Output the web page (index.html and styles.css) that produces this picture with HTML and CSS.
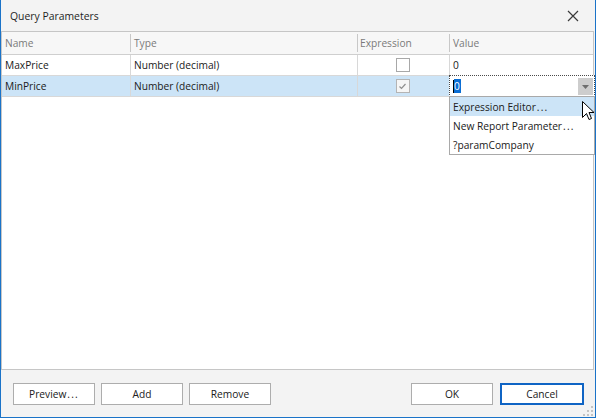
FILE: index.html
```html
<!DOCTYPE html>
<html>
<head>
<meta charset="utf-8">
<link rel="stylesheet" href="styles.css">
</head>
<body>
<div class="window">
  <div class="titlebar">
    <span class="title">Query Parameters</span>
    <span class="close">
      <svg width="12" height="12" viewBox="0 0 12 12"><path d="M1 1 L11 11 M11 1 L1 11" stroke="#3a3a3a" stroke-width="1.2" fill="none"/></svg>
    </span>
  </div>
  <div class="grid">
    <div class="row header">
      <div class="cell c-name"><span class="htext">Name</span></div>
      <div class="cell c-type"><span class="htext">Type</span></div>
      <div class="cell c-expr"><span class="htext">Expression</span></div>
      <div class="cell c-val"><span class="htext">Value</span></div>
    </div>
    <div class="row">
      <div class="cell c-name">MaxPrice</div>
      <div class="cell c-type">Number (decimal)</div>
      <div class="cell c-expr"><span class="check"></span></div>
      <div class="cell c-val">0</div>
    </div>
    <div class="row selected">
      <div class="cell c-name">MinPrice</div>
      <div class="cell c-type">Number (decimal)</div>
      <div class="cell c-expr"><span class="check checked"><svg width="11" height="11" viewBox="0 0 11 11"><path d="M2.5 5.5 L4.5 7.5 L8.5 3" stroke="#8f8f8f" stroke-width="1.2" fill="none"/></svg></span></div>
      <div class="cell c-val">
        <div class="editor">
          <span class="caret"></span><span class="sel">0</span>
          <span class="ddbtn"><svg width="7" height="4" viewBox="0 0 7 4"><path d="M0 0 L7 0 L3.5 4 Z" fill="#6e6e6e"/></svg></span>
        </div>
        <div class="popup">
          <div class="item hover">Expression Editor<span class="ell">...</span></div>
          <div class="item">New Report Parameter<span class="ell">...</span></div>
          <div class="item">?paramCompany</div>
        </div>
      </div>
    </div>
  </div>
  <div class="footer">
    <div class="group">
      <button class="btn">Preview<span class="ell">...</span></button>
      <button class="btn">Add</button>
      <button class="btn">Remove</button>
    </div>
    <div class="group">
      <button class="btn">OK</button>
      <button class="btn default">Cancel</button>
    </div>
  </div>
  <svg class="grip" width="10" height="10" viewBox="0 0 10 10">
    <rect x="8" y="0" width="2" height="2" fill="#c4c4c4"/>
    <rect x="4" y="4" width="2" height="2" fill="#c4c4c4"/>
    <rect x="8" y="4" width="2" height="2" fill="#c4c4c4"/>
    <rect x="0" y="8" width="2" height="2" fill="#c4c4c4"/>
    <rect x="4" y="8" width="2" height="2" fill="#c4c4c4"/>
    <rect x="8" y="8" width="2" height="2" fill="#c4c4c4"/>
  </svg>
  <svg class="cursor" width="13" height="21" viewBox="0 0 13 21">
    <path d="M0.5 0.5 L0.5 16.5 L4.5 12.5 L7 18.5 L9.5 17.5 L7 11.5 L12 11.5 Z" fill="#ffffff" stroke="#000000" stroke-width="1" stroke-linejoin="miter"/>
  </svg>
</div>
</body>
</html>
```
FILE: styles.css
```css
* { box-sizing: border-box; }
html, body { margin: 0; padding: 0; }
body {
  width: 596px;
  height: 418px;
  overflow: hidden;
  font-family: "Open Sans", "Noto Sans", sans-serif;
  font-size: 10.2px;
  color: #202020;
}
.window {
  position: relative;
  width: 596px;
  height: 418px;
  background: #f3f3f3;
  border-left: 1px solid #1a73c8;
  border-right: 1px solid #1a73c8;
  border-bottom: 1px solid #1a73c8;
  display: flex;
  flex-direction: column;
}
.titlebar {
  height: 31px;
  flex: none;
  display: flex;
  align-items: center;
  justify-content: space-between;
  padding: 0 16px 0 9px;
}
.title {
  font-size: 10.4px;
  color: #1e1e1e;
}
.close {
  display: flex;
  width: 12px;
  height: 12px;
  margin-top: 1px;
}
.ell { letter-spacing: 1.2px; margin-left: 1px; }
.grid {
  flex: none;
  height: 339px;
  margin-right: 1px;
  background: #ffffff;
  border: 1px solid #c6c6c6;
}
.row {
  display: grid;
  grid-template-columns: 129px 227px 92px 1fr;
  height: 21px;
  border-bottom: 1px solid #d8d8d8;
}
.row.header {
  height: 23px;
  background: #f7f7f7;
  border-bottom: 1px solid #cfcfcf;
}
.cell {
  display: flex;
  align-items: center;
  padding-left: 3px;
  border-right: 1px solid #d8d8d8;
  white-space: nowrap;
  position: relative;
}
.c-val { border-right: none; }
.header .cell {
  border-right: none;
  padding-left: 3px;
}
.header .c-type::before, .header .c-expr::before, .header .c-val::before {
  content: "";
  position: absolute;
  left: -1px;
  top: 2px;
  bottom: 2px;
  width: 1px;
  background: #c8c8c8;
}
.header .c-expr { padding-left: 2px; justify-content: flex-start; }
.htext { color: #7a7a7a; }
.c-expr { justify-content: center; padding-left: 0; }
.selected .c-name, .selected .c-type, .selected .c-expr {
  background: #cce4f7;
}
.check {
  width: 14px;
  height: 14px;
  border: 1px solid #a8a8a8;
  background: #ffffff;
  display: flex;
  align-items: center;
  justify-content: center;
  margin-left: -2px;
}
.check.checked { background: #f6f6f6; border-color: #b4b4b4; }
.editor {
  position: absolute;
  left: -1px;
  top: -1px;
  width: 146px;
  height: 22px;
  border: 1px dotted #4a4a4a;
  background: #ffffff;
  display: flex;
  align-items: center;
  padding-left: 3px;
}
.caret {
  width: 1px;
  height: 13px;
  background: #000;
}
.sel {
  background: #0a6ed4;
  color: #ffffff;
  line-height: 14px;
  padding: 0 1px 0 0;
}
.ddbtn {
  position: absolute;
  right: 1px;
  top: 2px;
  width: 15px;
  height: 17px;
  background: #cdcdcd;
  display: flex;
  align-items: center;
  justify-content: center;
}
.popup {
  position: absolute;
  left: -1px;
  top: 20px;
  width: 146px;
  background: #ffffff;
  border: 1px solid #a9a9a9;
  z-index: 2;
}
.item {
  height: 19px;
  display: flex;
  align-items: center;
  padding-left: 3px;
  white-space: nowrap;
}
.item.hover { background: #cce4f7; }
.footer {
  flex: 1;
  display: flex;
  justify-content: space-between;
  padding: 13px 11px 0 12px;
}
.group {
  display: flex;
  gap: 6px;
}
.btn {
  width: 82px;
  height: 22px;
  background: #ffffff;
  border: 1px solid #adadad;
  font-family: "Open Sans", "Noto Sans", sans-serif;
  font-size: 10.2px;
  color: #202020;
  padding: 0;
  margin: 0;
}
.btn.default { border: 2px solid #0f64c4; width: 84px; }
.group + .group { gap: 7px; }
.grip {
  position: absolute;
  right: 2px;
  bottom: 1px;
}
.cursor {
  position: absolute;
  left: 581px;
  top: 101px;
  z-index: 5;
}
```
